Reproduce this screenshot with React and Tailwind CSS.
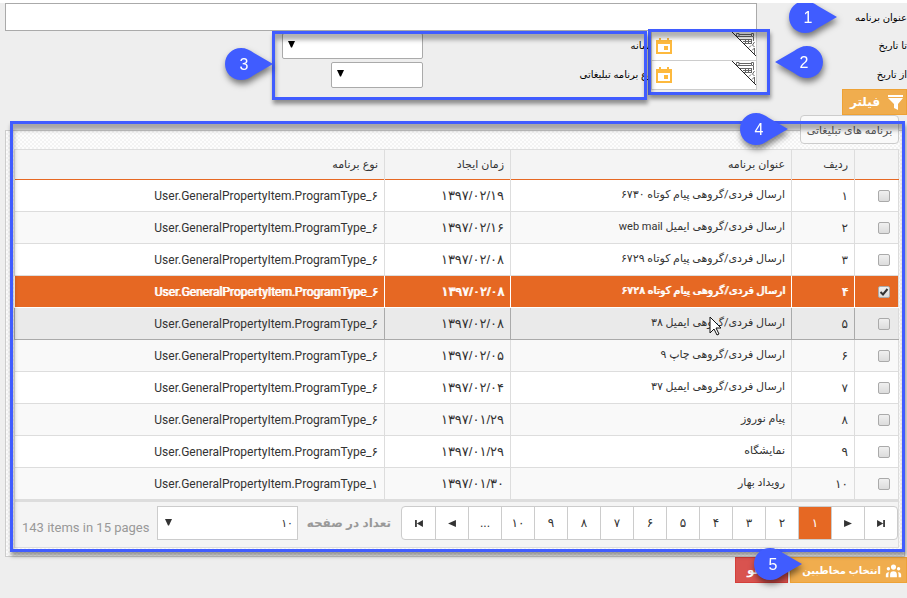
import { HiUserGroup } from "react-icons/hi";

const rows = [
  ["۱", "ارسال فردی/گروهی پیام کوتاه ۶۷۳۰", "۱۳۹۷/۰۲/۱۹", "۶"],
  ["۲", "ارسال فردی/گروهی ایمیل web mail", "۱۳۹۷/۰۲/۱۶", "۶"],
  ["۳", "ارسال فردی/گروهی پیام کوتاه ۶۷۲۹", "۱۳۹۷/۰۲/۰۸", "۶"],
  ["۴", "ارسال فردی/گروهی پیام کوتاه ۶۷۲۸", "۱۳۹۷/۰۲/۰۸", "۶"],
  ["۵", "ارسال فردی/گروهی ایمیل ۳۸", "۱۳۹۷/۰۲/۰۸", "۶"],
  ["۶", "ارسال فردی/گروهی چاپ ۹", "۱۳۹۷/۰۲/۰۵", "۶"],
  ["۷", "ارسال فردی/گروهی ایمیل ۳۷", "۱۳۹۷/۰۲/۰۴", "۶"],
  ["۸", "پیام نوروز", "۱۳۹۷/۰۱/۲۹", "۶"],
  ["۹", "نمایشگاه", "۱۳۹۷/۰۱/۲۹", "۶"],
  ["۱۰", "رویداد بهار", "۱۳۹۷/۰۱/۳۰", "۱"],
];

const pages = ["۲", "۳", "۴", "۵", "۶", "۷", "۸", "۹", "۱۰", "..."];

const PIN = "absolute z-20 h-10 w-13 overflow-visible drop-shadow-[1px_4px_3px_rgba(0,0,0,0.5)]";
const FRAME =
  "pointer-events-none absolute z-10 border-3 border-[#405cff] shadow-[1px_4px_4px_rgba(0,0,0,0.4),inset_1px_6px_4px_rgba(0,0,0,0.3)]";

function Pin({ n, className, flip }) {
  return (
    <svg viewBox="0 0 52 40" className={PIN + " " + className}>
      <path
        transform={flip ? "translate(48 0) scale(-1 1)" : undefined}
        d="M16 1C7 1 0 8 0 17s7 16 16 16c5 0 9-2 13-5l19-11L29 6C25 3 21 1 16 1Z"
        fill="#405cff"
      />
      <text x={flip ? 29 : 19} y="23" textAnchor="middle" fill="#fff" fontSize="16" fontFamily="Liberation Sans, sans-serif">
        {n}
      </text>
    </svg>
  );
}

function Triangle({ className }) {
  return (
    <svg viewBox="0 0 7 7" className={"pointer-events-none h-[7px] w-[7px] " + className}>
      <path d="M0 0H7L4 6.5H3Z" fill="currentColor" />
    </svg>
  );
}

function DateField({ id }) {
  return (
    <div className="relative z-1 flex h-[30px] w-[106px] shrink-0 items-center justify-end border border-[#ccc] bg-white">
      <input id={id} className="absolute inset-0 w-full bg-transparent outline-none" />
      <svg viewBox="0 0 24 24" className="absolute top-0 right-0 h-6 w-6" fill="none" stroke="#666" strokeWidth="1">
        <clipPath id={id + "-corner"}>
          <path d="M0 0H24V24Z" />
        </clipPath>
        <g clipPath={"url(#" + id + "-corner)"}>
          <path d="M7 2.5H19M7 4.5H19M4.5 1.5h2.500v3h-2.500zM19.500 1.500h2v3h-2zM21.500 5V9M5 7.500H20M11 9.500h8M12 11.500h7M13.500 8v4M16.500 8v4M19.500 7v5M22.500 10l-2 3 2 2M17 15.500l2-2M20 18.500l2.500-2.500V22" />
        </g>
        <path d="M0 0L24 24" stroke="#222" />
      </svg>
      <svg viewBox="0 0 16 16" className="ml-1 h-4 w-4" fill="#fdb93e">
        <path fillRule="evenodd" d="M0 2H3V0H5V2H11V0H13V2H16V16H0ZM2 6V14H14V6Z" />
        <path d="M8 8H12V12H8Z" />
      </svg>
    </div>
  );
}

function PageIcon({ d }) {
  return (
    <svg viewBox="0 0 9 8" className="mx-auto h-[7px] w-2" fill="currentColor">
      <path d={d} />
    </svg>
  );
}

export default function App() {
  return (
    <div
      dir="rtl"
      className="relative min-h-screen overflow-hidden border-t-3 border-white bg-[#eee] font-['Liberation_Sans','DejaVu_Sans',sans-serif] text-[11px] text-[#333]"
    >
      <form className="text-[10px] text-black" onSubmit={(e) => e.preventDefault()}>
        <div className="flex h-7 items-center pl-[5px]">
          <label htmlFor="title" className="w-[150px] shrink-0">عنوان برنامه</label>
          <input id="title" className="h-7 min-w-0 flex-1 border border-[#aaa] bg-white px-2" />
        </div>
        <div className="flex h-[29px] items-center">
          <label htmlFor="to" className="w-[150px] shrink-0">تا تاریخ</label>
          <DateField id="to" />
          <label htmlFor="media" className="-mr-1 w-[232px] shrink-0">رسانه</label>
          <div className="relative">
            <select id="media" className="block h-[26px] w-[141px] appearance-none rounded-xs border border-[#aaa] bg-white" />
            <Triangle className="absolute top-2 left-[6px]" />
          </div>
        </div>
        <div className="flex h-[29px] items-center">
          <label htmlFor="from" className="w-[150px] shrink-0">از تاریخ</label>
          <DateField id="from" />
          <label htmlFor="kind" className="-mr-1 w-[232px] shrink-0">نوع برنامه تبلیغاتی</label>
          <div className="relative">
            <select id="kind" className="block h-[26px] w-[92px] appearance-none rounded-xs border border-[#aaa] bg-white" />
            <Triangle className="absolute top-2 left-[6px]" />
          </div>
        </div>
        <button className="flex h-[26px] w-[65px] items-center gap-2 border border-[#eea236] bg-[#f0ad4e] pr-[3px] text-xs font-bold whitespace-nowrap text-white">
          <svg viewBox="0 0 15 15" className="h-[15px] w-[15px] shrink-0" fill="currentColor">
            <path d="M0 0H15V2H0ZM0 3H15L10 9V15L6 13V9Z" />
          </svg>
          فیلتر
        </button>
      </form>

      <section className="mr-[2px] ml-[5px]">
        <div className="relative z-1 mr-[6px] -mb-[14px] h-[29px] w-[99px] rounded-sm border border-[#ccc] bg-[#f9f9f9] text-center leading-[29px] whitespace-nowrap text-[#555]">
          برنامه های تبلیغاتی
        </div>
        <div className="border border-[#ccc] bg-[#fafafa] bg-[repeating-conic-gradient(#f3f3f3_0_25%,#fdfdfd_0_50%)] bg-size-[4px_4px] pt-[18px] pr-[5px] pb-2 pl-2">
          <table className="w-full table-fixed border-collapse border border-[#ddd] bg-white">
            <thead>
              <tr className="h-[30px] border-b border-[#e66823] bg-[#f4f4f4] text-right">
                <th className="w-[44px] border-l border-[#ddd]" />
                <th className="w-[63px] border-l border-[#ddd] px-[6px] font-normal">ردیف</th>
                <th className="w-[281px] border-l border-[#ddd] px-[6px] font-normal">عنوان برنامه</th>
                <th className="w-[126px] border-l border-[#ddd] px-[6px] font-normal">زمان ایجاد</th>
                <th className="px-[6px] font-normal">نوع برنامه</th>
              </tr>
            </thead>
            <tbody>
              {rows.map(([n, title, date, type], i) => {
                const tone =
                  i === 3
                    ? "border-white bg-[#e66823] text-white [text-shadow:1px_0_0_#fff]"
                    : i === 4
                      ? "border-[#aaa] bg-[#eaeaea]"
                      : i % 2
                        ? "border-[#ddd] bg-[#f9f9f9]"
                        : "border-[#ddd] bg-white";
                return (
                  <tr key={n} className={"h-8 border-b *:border-l *:border-inherit *:px-[6px] " + tone}>
                    <td>
                      <div className="relative mr-[2px] h-3 w-3">
                        <input
                          type="checkbox"
                          aria-label={title}
                          defaultChecked={i === 3}
                          className="peer block h-3 w-3 appearance-none rounded-xs border border-[#aaa] bg-linear-to-b from-[#f0f0f0] to-[#dcdcdc]"
                        />
                        <svg viewBox="0 0 12 12" className="pointer-events-none invisible absolute inset-0 peer-checked:visible" fill="none" stroke="#333" strokeWidth="2">
                          <path d="M2.5 6L5 8.500L9.500 3" />
                        </svg>
                      </div>
                    </td>
                    <td className="text-xs">{n}</td>
                    <td className="font-[Roboto,'DejaVu_Sans',sans-serif] whitespace-nowrap">{title}</td>
                    <td className="text-[13px]">{date}</td>
                    <td dir="ltr" className="text-right font-[Roboto,'DejaVu_Sans',sans-serif] text-xs">
                      User.GeneralPropertyItem.ProgramType_{type}
                    </td>
                  </tr>
                );
              })}
            </tbody>
          </table>
          <footer className="flex h-12 items-start border border-t-2 border-[#ddd] bg-[#f4f4f4] pt-1 text-[#999]">
            <nav className="flex h-[34px] shrink-0 overflow-hidden rounded-sm border border-[#ccc] bg-white text-xs text-[#333] *:w-[33px] *:shrink-0 *:border-l *:border-[#ccc] *:last:border-l-0">
              <button aria-label="last"><PageIcon d="M0 0L7 4L0 8ZM7 0H9V8H7Z" /></button>
              <button aria-label="next"><PageIcon d="M0 0L9 4L0 8Z" /></button>
              <button className="bg-[#e66823] text-white">۱</button>
              {pages.map((p) => (
                <button key={p}>{p}</button>
              ))}
              <button aria-label="previous"><PageIcon d="M9 0L0 4L9 8Z" /></button>
              <button aria-label="first"><PageIcon d="M9 0L2 4L9 8ZM0 0H2V8H0Z" /></button>
            </nav>
            <label htmlFor="size" className="mr-[10px] w-[93px] shrink-0 text-xs leading-[34px] font-bold whitespace-nowrap">تعداد در صفحه</label>
            <div className="relative shrink-0 text-[#333]">
              <select id="size" className="block h-[34px] w-[141px] appearance-none border border-[#ccc] bg-white px-1">
                <option>۱۰</option>
              </select>
              <Triangle className="absolute top-[13px] left-2" />
            </div>
            <span dir="ltr" className="mr-auto ml-[7px] pt-3 font-[Roboto,sans-serif] text-[13px] whitespace-nowrap">143 items in 15 pages</span>
          </footer>
        </div>
      </section>

      <div className="flex gap-[2px] text-[10px] font-bold text-white">
        <button className="flex h-[26px] w-[117px] items-center gap-1 border border-[#eea236] bg-[#f0ad4e] pr-1 whitespace-nowrap">
          <HiUserGroup className="h-[17px] w-[17px] shrink-0" />
          انتخاب مخاطبین
        </button>
        <button className="h-[26px] w-[53px] border border-[#d43f3a] bg-[#d9534f] pl-[11px] text-left text-xs">لغو</button>
      </div>

      <div className={FRAME + " top-[26px] right-[137px] h-[66px] w-[122px]"} />
      <div className={FRAME + " top-7 right-[260px] h-[69px] w-[375px]"} />
      <div className={FRAME + " top-[118px] right-[2px] left-[10px] h-[431px]"} />
      <Pin n="1" className="top-[-3px] right-[66px]" />
      <Pin n="2" flip className="top-[42px] right-[80px]" />
      <Pin n="3" className="top-[44px] right-[630px]" />
      <Pin n="4" className="top-[109px] right-[115px]" />
      <Pin n="5" className="top-[544px] right-[101px]" />
      <svg viewBox="0 0 13 20" className="absolute top-[313px] right-[185px] z-20 h-5 w-[13px]">
        <path d="M1 1V17L5 13L8 19L10 18L7 12H12Z" fill="#fff" stroke="#111" />
      </svg>
    </div>
  );
}
